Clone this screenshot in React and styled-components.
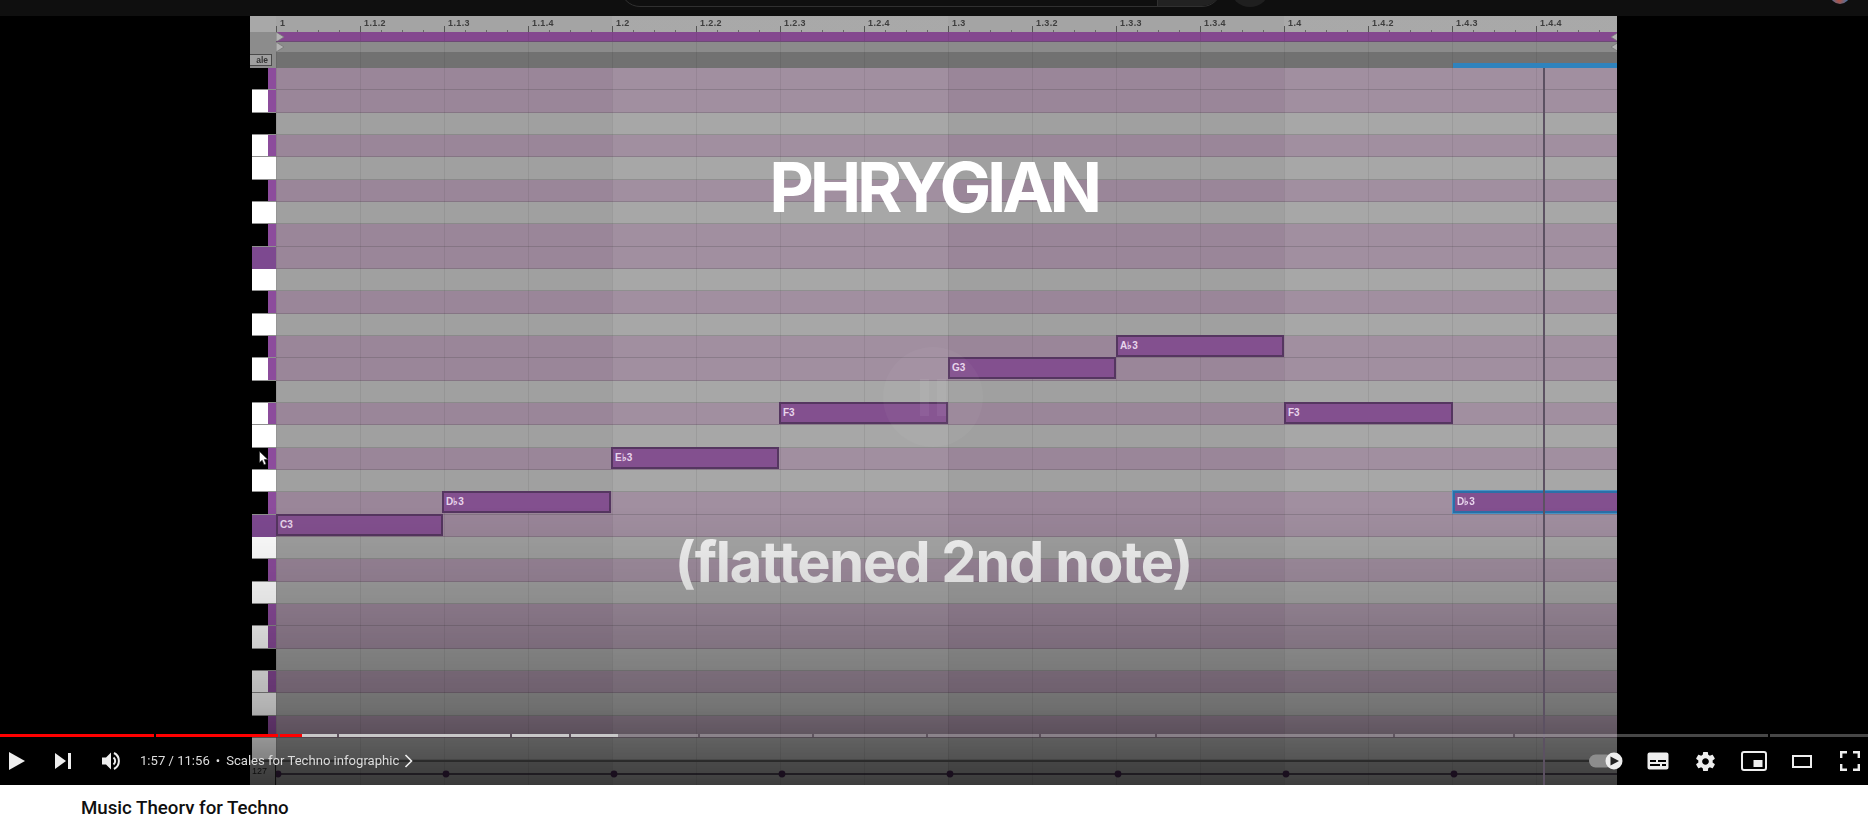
import React from "react";
import styled, { createGlobalStyle } from "styled-components";

const Global = createGlobalStyle`
  html, body { margin: 0; padding: 0; background: #fff; overflow: hidden; }
  body { font-family: Roboto, "Liberation Sans", sans-serif; }
  * { box-sizing: border-box; }
`;

const Page = styled.div`
  width: 1868px;
  height: 814px;
  overflow: hidden;
  display: flex;
  flex-direction: column;
  background: #fff;
`;

const TopBar = styled.header`
  flex: 0 0 16px;
  height: 16px;
  background: #0f0f0f;
  overflow: hidden;
  display: flex;
  align-items: flex-end;
  padding-left: 620px;
  padding-bottom: 9px;
`;

const SearchBox = styled.div`
  flex: 0 0 602px;
  height: 40px;
  border: 1px solid #303030;
  border-radius: 20px;
  display: flex;
  justify-content: flex-end;
  overflow: hidden;
`;

const SearchButton = styled.div`
  width: 64px;
  background: #222;
  border-left: 1px solid #303030;
`;

const MicButton = styled.div`
  flex: 0 0 40px;
  height: 40px;
  margin-left: 8px;
  border-radius: 50%;
  background: #1f1f1f;
`;

const Avatar = styled.div`
  flex: 0 0 20px;
  height: 20px;
  margin-left: 560px;
  align-self: flex-start;
  margin-top: -16px;
  border-radius: 50%;
  background: radial-gradient(circle at 45% 80%, #b8503f 0, #4e6f99 40%, #7b6a58 80%);
`;

const Player = styled.section`
  position: relative;
  flex: 0 0 769px;
  height: 769px;
  background: #000;
  overflow: hidden;
`;

const Frame = styled.div`
  width: 1367px;
  height: 769px;
  margin-left: 250px;
  display: flex;
  flex-direction: column;
  filter: blur(0.45px);
  position: relative;
`;

const BEAT = 84;

const barShade = `repeating-linear-gradient(90deg,
  rgba(0,0,0,0) 0, rgba(0,0,0,0) 336px, rgba(255,255,255,0.07) 336px, rgba(255,255,255,0.07) 672px)`;

const beatLines = `repeating-linear-gradient(90deg,
  rgba(0,0,0,0.07) 0, rgba(0,0,0,0.07) 1px, transparent 1px, transparent ${BEAT}px)`;

const Head = styled.div`
  flex: 0 0 ${(p) => p.$h}px;
  height: ${(p) => p.$h}px;
  display: flex;
  background: ${(p) => p.$bg};
`;

const HeadGutter = styled.div`
  flex: 0 0 26px;
  background: ${(p) => p.$bg};
  display: flex;
  align-items: center;
  position: relative;
`;

const HeadTrack = styled.div`
  flex: 1;
  position: relative;
  background-color: ${(p) => p.$bg};
  background-image: ${beatLines};
  border-bottom: ${(p) => (p.$line ? `1px solid ${p.$line}` : "none")};
  overflow: hidden;
`;

const RulerTrack = styled(HeadTrack)`
  display: flex;
  background-image: linear-gradient(90deg, transparent 336px, rgba(255,255,255,.05) 336px, rgba(255,255,255,.05) 672px, transparent 672px, transparent 1008px, rgba(255,255,255,.05) 1008px);
`;

const RulerCell = styled.div`
  flex: 0 0 ${BEAT}px;
  height: 16px;
  position: relative;
  padding: 1px 0 0 4px;
  font: 700 9px/13px "Liberation Sans", sans-serif;
  letter-spacing: 0.4px;
  color: #3d3d3d;
  background-image: repeating-linear-gradient(90deg, #666 0, #666 1px, transparent 1px, transparent 21px);
  background-size: 100% 2px;
  background-position: 21px 100%;
  background-repeat: no-repeat;
  &::before {
    content: "";
    position: absolute;
    left: 0;
    top: 10px;
    height: 6px;
    width: 1px;
    background: #555;
  }
`;

const Wedge = styled.svg`
  position: absolute;
  top: ${(p) => p.$top}px;
  ${(p) => (p.$right ? "right: -2px;" : "left: 0;")}
  width: 8px;
  height: 10px;
`;

const ScaleTag = styled.div`
  width: 22px;
  height: 12px;
  border: 1px solid #4a4a4a;
  border-left: none;
  background: #a0a0a0;
  font: 700 8.5px/10px "Liberation Sans", sans-serif;
  color: #333;
  text-align: right;
  padding-right: 3px;
  overflow: hidden;
`;

const BlueLine = styled.div`
  position: absolute;
  left: 1177px;
  right: 0;
  bottom: 0;
  height: 5px;
  background: #2f83bd;
`;

const Roll = styled.div`
  position: relative;
  height: 692px;
  flex: 0 0 692px;
  overflow: hidden;
`;

const KeyRow = styled.div`
  height: 22.33px;
  display: flex;
`;

const Key = styled.div`
  flex: 0 0 26px;
  display: flex;
  padding-left: 1.5px;
  background: #000;
`;

const KeyFace = styled.div`
  flex: 1;
  background: ${(p) => (p.$root ? "#7d4990" : p.$black ? "#000" : "#fff")};
  border-bottom: 1px solid ${(p) => (p.$root ? "#7d4990" : "#8f8f8f")};
`;

const ScaleMark = styled.div`
  flex: 0 0 8px;
  background: #8c4c9c;
  border-bottom: 1px solid #8f8f8f;
`;

const Lane = styled.div`
  flex: 1;
  background-color: ${(p) => (p.$scale ? "#9a8699" : "#a0a0a0")};
  background-image: ${beatLines}, ${barShade};
  border-bottom: 1px solid rgba(60,60,60,.22);
`;

const Note = styled.div`
  position: absolute;
  left: ${(p) => p.$x}px;
  top: ${(p) => p.$y}px;
  width: ${(p) => p.$w}px;
  height: 22px;
  background: #83508f;
  border: 2px solid ${(p) => (p.$sel ? "#2b6fa8" : "#553660")};
  box-shadow: ${(p) => (p.$sel ? "0 0 0 1px #4b92c4" : "none")};
  color: #e8d5ec;
  font: 700 10px/18px "Liberation Sans", sans-serif;
  padding-left: 2px;
`;

const Playhead = styled.div`
  position: absolute;
  left: 1293px;
  top: 52px;
  bottom: 0;
  width: 2px;
  background: #5c5162;
  z-index: 3;
`;

const Cursor = styled.svg`
  position: absolute;
  left: 9px;
  top: 383px;
  width: 10px;
  height: 15px;
`;

const Automation = styled.div`
  flex: 1;
  display: flex;
  background: #8b8b8b;
  border-top: 2px solid #555;
`;

const AutoGutter = styled.div`
  flex: 0 0 26px;
  font: 400 9px/12px "Liberation Sans", sans-serif;
  color: #222;
  padding: 3px 0 0 2px;
  border-right: 1px solid #222;
`;

const AutoTrack = styled.div`
  flex: 1;
  position: relative;
  background-image: ${beatLines}, ${barShade};
`;

const AutoSvg = styled.svg`
  display: block;
  width: 100%;
  height: 100%;
`;

const Shade = styled.div`
  position: absolute;
  inset: 0;
  pointer-events: none;
  background: linear-gradient(180deg, rgba(0,0,0,0) 0, rgba(0,0,0,0) 490px, rgba(0,0,0,.12) 590px, rgba(0,0,0,.3) 690px, rgba(0,0,0,.58) 769px);
`;

const Headline = styled.div`
  position: absolute;
  left: 0;
  right: 0;
  top: ${(p) => p.$top}px;
  text-align: center;
  font-family: Inter, "Open Sans", sans-serif;
  font-weight: 700;
  font-size: ${(p) => p.$size}px;
  line-height: 1;
  color: ${(p) => p.$color};
  letter-spacing: ${(p) => p.$ls}px;
  pointer-events: none;
`;

const Ghost = styled.div`
  position: absolute;
  left: 633px;
  top: 331px;
  width: 100px;
  height: 100px;
  border-radius: 50%;
  background: rgba(255,255,255,.035);
  display: flex;
  align-items: center;
  justify-content: center;
  gap: 8px;
`;

const GhostBar = styled.span`
  width: 9px;
  height: 37px;
  background: rgba(255,255,255,.06);
`;

const Controls = styled.div`
  position: absolute;
  left: 0;
  right: 0;
  bottom: 0;
  height: 51px;
  display: flex;
  flex-direction: column;
`;

const Progress = styled.div`
  height: 3px;
  display: flex;
  gap: 2px;
`;

const Chapter = styled.div`
  flex: 0 0 ${(p) => p.$w}px;
  height: 3px;
  background: ${(p) => p.$bg};
`;

const ControlBar = styled.div`
  flex: 1;
  display: flex;
  align-items: center;
  color: #eee;
`;

const IconSlot = styled.div`
  flex: 0 0 ${(p) => p.$w}px;
  margin-left: ${(p) => p.$ml || 0}px;
  margin-right: ${(p) => p.$mr || 0}px;
  display: flex;
  align-items: center;
  justify-content: center;
  svg { display: block; }
`;

const TimeText = styled.span`
  margin-left: 19px;
  font: 400 13.1px/20px Roboto, sans-serif;
  color: #ddd;
`;

const Dot = styled.span`
  margin: 0 6px 0 6px;
  font: 400 13px/20px Roboto, sans-serif;
  color: #ddd;
`;

const ChapterTitle = styled.span`
  font: 400 13.1px/20px Roboto, sans-serif;
  color: #ddd;
`;

const ChevronSvg = styled.svg`
  margin-left: 5px;
`;

const Spacer = styled.div`
  flex: 1;
`;

const Below = styled.div`
  flex: 1;
  padding: 10px 0 0 81px;
  font: 500 18.7px/26px Roboto, "Liberation Sans", sans-serif;
  color: #0f0f0f;
  background: #fff;
`;

const PATTERN = [
  "bs", "ws", "b", "ws", "w", "bs", "w", "bs", "r", "w", "bs", "w",
  "bs", "ws", "b", "ws", "w", "bs", "w", "bs", "r", "w", "bs", "w",
  "bs", "ws", "b", "ws", "w", "bs", "w",
];

const ROW = 22.33;

const rulerLabels = [
  "1", "1.1.2", "1.1.3", "1.1.4", "1.2", "1.2.2", "1.2.3", "1.2.4",
  "1.3", "1.3.2", "1.3.3", "1.3.4", "1.4", "1.4.2", "1.4.3", "1.4.4",
];

const notes = [
  { name: "C3", row: 20, x: 26, w: 167 },
  { name: "D♭3", row: 19, x: 192, w: 169 },
  { name: "E♭3", row: 17, x: 361, w: 168 },
  { name: "F3", row: 15, x: 529, w: 169 },
  { name: "G3", row: 13, x: 698, w: 168 },
  { name: "A♭3", row: 12, x: 866, w: 168 },
  { name: "F3", row: 15, x: 1034, w: 169 },
  { name: "D♭3", row: 19, x: 1203, w: 170, sel: true },
];

const PLAYED = "#f00";
const LOADED = "#c8c8c8";
const REST = "rgba(255,255,255,.28)";

const chapters = [
  [154, PLAYED],
  [122, PLAYED],
  [57, `linear-gradient(90deg, ${PLAYED} 22px, ${LOADED} 22px)`],
  [171, LOADED],
  [57, LOADED],
  [127, `linear-gradient(90deg, ${LOADED} 47px, ${REST} 47px)`],
  [112, REST],
  [112, REST],
  [111, REST],
  [114, REST],
  [236, REST],
  [118, REST],
  [253, REST],
  [98, REST],
];

const PlayIcon = () => (
  <svg width="18" height="20" viewBox="0 0 18 20"><path d="M1 1 L17 10 L1 19 Z" fill="#eee" /></svg>
);
const NextIcon = () => (
  <svg width="18" height="18" viewBox="0 0 18 18"><path d="M1 1 L12 9 L1 17 Z" fill="#eee" /><rect x="14" y="1" width="3" height="16" fill="#eee" /></svg>
);
const VolumeIcon = () => (
  <svg width="20" height="22" viewBox="0 0 20 22" fill="none">
    <path d="M1 7.5 H5 L10 2.5 V19.5 L5 14.5 H1 Z" fill="#eee" />
    <path d="M12.5 7.5 a4.5 4.5 0 0 1 0 7" stroke="#eee" strokeWidth="2" />
    <path d="M13 3 a9 9 0 0 1 0 16" stroke="#eee" strokeWidth="2" />
  </svg>
);
const Chevron = () => (
  <ChevronSvg width="9" height="14" viewBox="0 0 9 14" fill="none">
    <path d="M1.5 1 L7.5 7 L1.5 13" stroke="#eee" strokeWidth="1.6" />
  </ChevronSvg>
);
const AutoplayIcon = () => (
  <svg width="34" height="20" viewBox="0 0 34 20">
    <rect x="0" y="3.5" width="24" height="13" rx="6.5" fill="#8d8d8d" />
    <circle cx="25" cy="10" r="8.5" fill="#eee" />
    <path d="M21.5 5.5 L30 10 L21.5 14.5 Z" fill="#222" />
  </svg>
);
const SubsIcon = () => (
  <svg width="22" height="18" viewBox="0 0 22 18">
    <path fillRule="evenodd" fill="#eee" d="M2.5 0.5 H19.5 A2 2 0 0 1 21.5 2.5 V15.5 A2 2 0 0 1 19.5 17.5 H2.5 A2 2 0 0 1 0.5 15.5 V2.5 A2 2 0 0 1 2.5 0.5 Z M3 8 V10 H9 V8 Z M11 8 V10 H19 V8 Z M3 12 V14 H13 V12 Z M15 12 V14 H19 V12 Z" />
  </svg>
);
const GearIcon = () => (
  <svg width="23" height="23" viewBox="0 0 24 24">
    <path fillRule="evenodd" fill="#eee" d="M19.4 13c.04-.33.1-.66.1-1s-.06-.67-.1-1l2.1-1.65c.2-.15.25-.42.13-.64l-2-3.46c-.12-.22-.39-.3-.61-.22l-2.49 1c-.52-.4-1.08-.73-1.69-.98l-.38-2.65C14.46 2.18 14.25 2 14 2h-4c-.25 0-.46.18-.49.42l-.38 2.65c-.61.25-1.17.59-1.69.98l-2.49-1c-.23-.09-.49 0-.61.22l-2 3.46c-.13.22-.07.49.12.64L4.57 11c-.04.33-.07.66-.07 1s.03.67.07 1l-2.11 1.65c-.19.15-.25.42-.12.64l2 3.46c.12.22.39.3.61.22l2.49-1c.52.4 1.08.73 1.69.98l.38 2.65c.03.24.24.42.49.42h4c.25 0 .46-.18.49-.42l.38-2.65c.61-.25 1.17-.59 1.69-.98l2.49 1c.23.09.49 0 .61-.22l2-3.46c.12-.22.07-.49-.12-.64L19.4 13zM12 15.5c-1.93 0-3.5-1.57-3.5-3.5s1.57-3.5 3.5-3.5 3.5 1.57 3.5 3.5-1.57 3.5-3.5 3.5z" />
  </svg>
);
const MiniIcon = () => (
  <svg width="26" height="20" viewBox="0 0 26 20" fill="none">
    <rect x="1" y="1" width="24" height="18" rx="2" stroke="#eee" strokeWidth="2" />
    <rect x="12.5" y="9" width="9" height="7" fill="#eee" />
  </svg>
);
const TheaterIcon = () => (
  <svg width="20" height="13" viewBox="0 0 20 13" fill="none">
    <rect x="1" y="1" width="18" height="11" stroke="#eee" strokeWidth="2" />
  </svg>
);
const FullscreenIcon = () => (
  <svg width="20" height="20" viewBox="0 0 20 20" fill="none" stroke="#eee" strokeWidth="2.4">
    <path d="M1.2 7 V1.2 H7 M13 1.2 H18.8 V7 M18.8 13 V18.8 H13 M7 18.8 H1.2 V13" />
  </svg>
);

const WedgeShape = ({ top, right }) => (
  <Wedge $top={top} $right={right} viewBox="0 0 8 10">
    <path d={right ? "M8 0 L0 5 L8 10" : "M0 0 L8 5 L0 10 Z"} fill="#b3b3b3" stroke="#777" strokeWidth="0.8" />
  </Wedge>
);

export default function App() {
  return (
    <Page>
      <Global />
      <TopBar>
        <SearchBox><SearchButton /></SearchBox>
        <MicButton />
        <Avatar />
      </TopBar>
      <Player>
        <Frame>
          <Head $h={16} $bg="#a4a4a4">
            <HeadGutter $bg="#a8a8a8" />
            <RulerTrack $bg="#a4a4a4">
              {rulerLabels.map((l) => <RulerCell key={l}>{l}</RulerCell>)}
            </RulerTrack>
          </Head>
          <Head $h={10} $bg="#8c8c8c">
            <HeadGutter $bg="#8c8c8c" />
            <HeadTrack $bg="#84488f" $line="#6c4a74"><WedgeShape top={0} /><WedgeShape top={0} right /></HeadTrack>
          </Head>
          <Head $h={10} $bg="#8c8c8c">
            <HeadGutter $bg="#8c8c8c" />
            <HeadTrack $bg="#8b8b8b"><WedgeShape top={0} /><WedgeShape top={0} right /></HeadTrack>
          </Head>
          <Head $h={16} $bg="#707070">
            <HeadGutter $bg="#8c8c8c"><ScaleTag>ale</ScaleTag></HeadGutter>
            <HeadTrack $bg="#717171"><BlueLine /></HeadTrack>
          </Head>
          <Roll>
            {PATTERN.map((t, i) => (
              <KeyRow key={i}>
                <Key>
                  <KeyFace $black={t[0] === "b"} $root={t === "r"} />
                  {t.endsWith("s") && <ScaleMark />}
                </Key>
                <Lane $scale={t.endsWith("s") || t === "r"} />
              </KeyRow>
            ))}
            {notes.map((n, i) => (
              <Note key={i} $x={n.x} $y={n.row * ROW - 1} $w={n.w} $sel={n.sel}>{n.name}</Note>
            ))}
            <Cursor viewBox="0 0 10 15">
              <path d="M0.5 0.5 L0.5 11.5 L3.2 9.2 L5 13.8 L7 13 L5.2 8.6 L8.8 8.4 Z" fill="#fff" stroke="#333" strokeWidth="0.6" />
            </Cursor>
          </Roll>
          <Automation>
            <AutoGutter>127</AutoGutter>
            <AutoTrack>
              <AutoSvg viewBox="0 0 1341 23" preserveAspectRatio="none">
                <line x1="0" y1="12" x2="1341" y2="12" stroke="#2d2333" strokeWidth="1.6" />
                {[0, 168, 336, 504, 672, 840, 1008, 1176].map((x) => (
                  <circle key={x} cx={x + 2} cy="12" r="3.4" fill="#3a2243" />
                ))}
              </AutoSvg>
            </AutoTrack>
          </Automation>
          <Playhead />
          <Ghost><GhostBar /><GhostBar /></Ghost>
          <Headline $top={137} $size={69} $color="#fff" $ls={-4.2}>PHRYGIAN</Headline>
          <Headline $top={518} $size={56} $color="#f2f2f2" $ls={-1.2}>(flattened 2nd note)</Headline>
          <Shade />
        </Frame>
        <Controls>
          <Progress>
            {chapters.map(([w, bg], i) => <Chapter key={i} $w={w} $bg={bg} />)}
          </Progress>
          <ControlBar>
            <IconSlot $w={18} $ml={8}><PlayIcon /></IconSlot>
            <IconSlot $w={18} $ml={28}><NextIcon /></IconSlot>
            <IconSlot $w={20} $ml={29}><VolumeIcon /></IconSlot>
            <TimeText>1:57 / 11:56</TimeText>
            <Dot>•</Dot>
            <ChapterTitle>Scales for Techno infographic</ChapterTitle>
            <Chevron />
            <Spacer />
            <IconSlot $w={34}><AutoplayIcon /></IconSlot>
            <IconSlot $w={22} $ml={24}><SubsIcon /></IconSlot>
            <IconSlot $w={23} $ml={25}><GearIcon /></IconSlot>
            <IconSlot $w={26} $ml={24}><MiniIcon /></IconSlot>
            <IconSlot $w={20} $ml={25}><TheaterIcon /></IconSlot>
            <IconSlot $w={20} $ml={28} $mr={8}><FullscreenIcon /></IconSlot>
          </ControlBar>
        </Controls>
      </Player>
      <Below>Music Theory for Techno</Below>
    </Page>
  );
}
